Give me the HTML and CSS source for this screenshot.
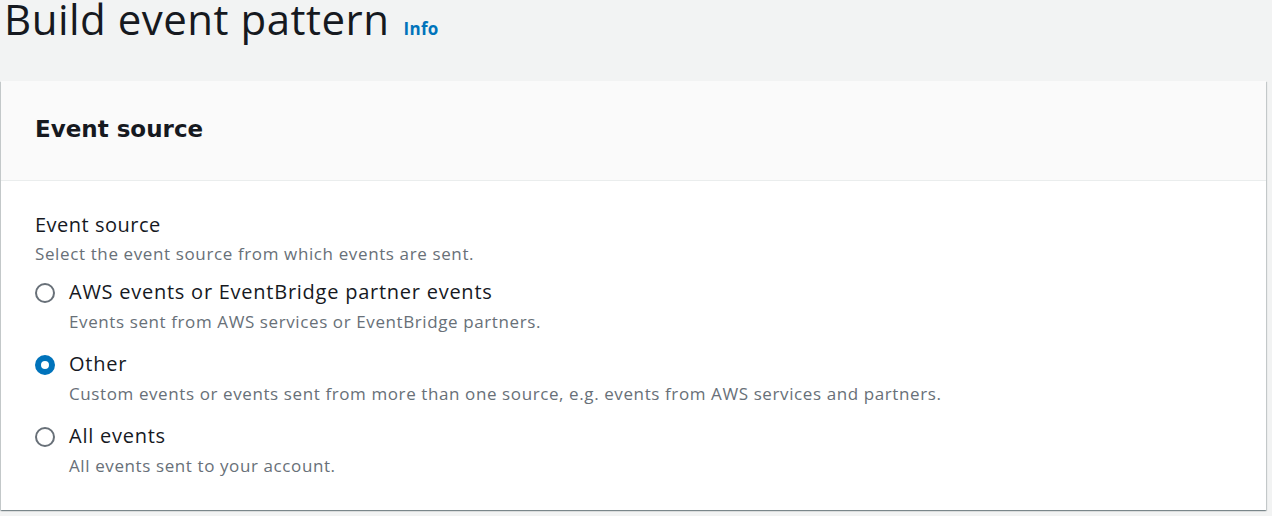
FILE: index.html
```html
<!DOCTYPE html>
<html lang="en">
<head>
<meta charset="utf-8">
<title>Build event pattern</title>
<link rel="stylesheet" href="styles.css">
</head>
<body>
<div class="page-head">
  <h1 class="title">Build event pattern</h1>
  <a class="info" href="#">Info</a>
</div>
<section class="card">
  <div class="card-header">
    <h2 class="card-title">Event source</h2>
  </div>
  <div class="card-body">
    <div class="field-label">Event source</div>
    <div class="field-desc">Select the event source from which events are sent.</div>
    <div class="radio-group">
      <div class="radio-option">
        <span class="radio"></span>
        <div class="radio-text">
          <div class="radio-label">AWS events or EventBridge partner events</div>
          <div class="radio-desc">Events sent from AWS services or EventBridge partners.</div>
        </div>
      </div>
      <div class="radio-option">
        <span class="radio checked"></span>
        <div class="radio-text">
          <div class="radio-label">Other</div>
          <div class="radio-desc">Custom events or events sent from more than one source, e.g. events from AWS services and partners.</div>
        </div>
      </div>
      <div class="radio-option">
        <span class="radio"></span>
        <div class="radio-text">
          <div class="radio-label">All events</div>
          <div class="radio-desc">All events sent to your account.</div>
        </div>
      </div>
    </div>
  </div>
</section>
</body>
</html>
```

FILE: styles.css
```css
html, body {
  margin: 0;
  padding: 0;
}
body {
  background: #f2f3f3;
  font-family: "Open Sans", "Noto Sans", sans-serif;
  color: #16191f;
  width: 1272px;
  height: 516px;
  overflow: hidden;
}
.page-head {
  display: flex;
  align-items: baseline;
  gap: 14px;
  margin: 0 0 0 4px;
  height: 38px;
}
.title {
  margin: 0;
  font-size: 42px;
  font-weight: 400;
  line-height: 38px;
  letter-spacing: 0.5px;
}
.info {
  color: #0073bb;
  font-weight: 700;
  font-size: 17px;
  letter-spacing: 0.3px;
  text-decoration: none;
}
.card {
  margin: 43px 0 0 1px;
  width: 1265px;
  background: #fff;
  box-shadow: 0 1px 1px 0 rgba(0, 28, 36, 0.3), 1px 1px 1px 0 rgba(0, 28, 36, 0.15), -1px 1px 1px 0 rgba(0, 28, 36, 0.15);
}
.card-header {
  background: #fafafa;
  border-bottom: 1px solid #eaeded;
  padding: 34px 34px 37px;
}
.card-title {
  margin: 0;
  font-family: "DejaVu Sans", "Open Sans", sans-serif;
  font-size: 23px;
  font-weight: 700;
  line-height: 28px;
}
.card-body {
  padding: 31px 34px 32px;
}
.field-label {
  font-size: 20px;
  line-height: 26px;
  letter-spacing: 0.5px;
}
.field-desc {
  margin-top: 4px;
  font-size: 17px;
  line-height: 24px;
  letter-spacing: 0.62px;
  color: #687078;
}
.radio-group {
  display: flex;
  flex-direction: column;
  gap: 16px;
  margin-top: 12px;
}
.radio-option {
  display: flex;
  gap: 14px;
}
.radio {
  flex: none;
  width: 20px;
  height: 20px;
  margin-top: 5px;
  box-sizing: border-box;
  border: 2px solid #687078;
  border-radius: 50%;
  background: #fff;
}
.radio.checked {
  border: 6px solid #0073bb;
}
.radio-label {
  font-size: 20px;
  line-height: 28px;
  letter-spacing: 0.75px;
}
.radio-desc {
  margin-top: 4px;
  font-size: 17px;
  line-height: 24px;
  letter-spacing: 0.6px;
  color: #687078;
}
```
